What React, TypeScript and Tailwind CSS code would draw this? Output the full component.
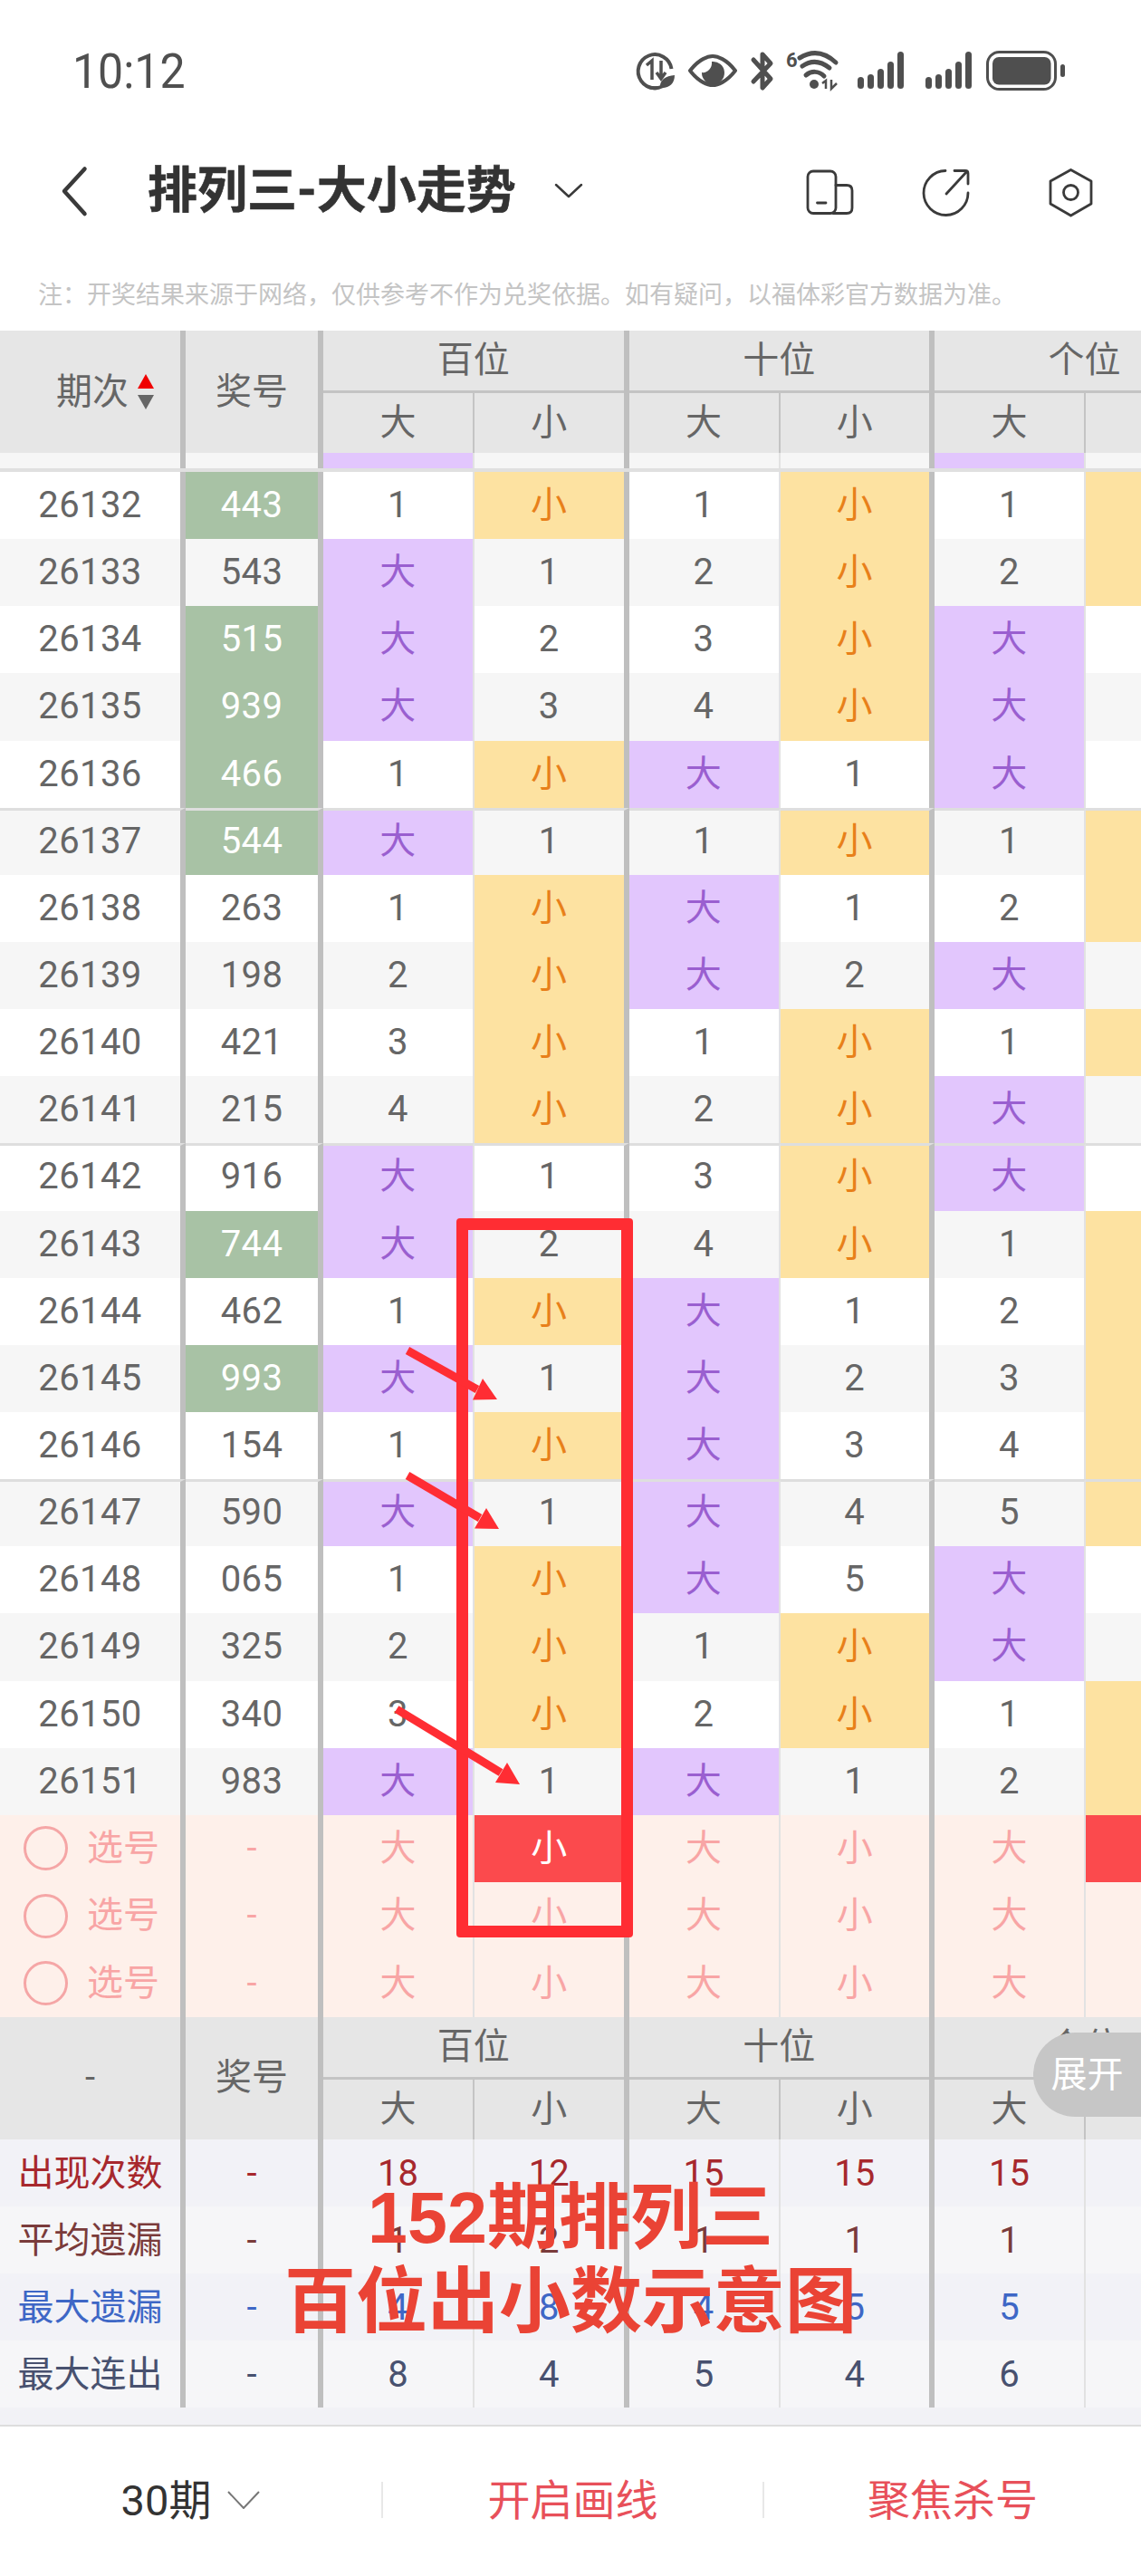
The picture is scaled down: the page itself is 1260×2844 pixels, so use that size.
import React from 'react';

// column widths shared by every table row
const cols = [
    'w-[205px] border-r-[6px] border-r-[#bfbfbf]',
    'w-[152px] border-r-[6px] border-r-[#bfbfbf]',
    'w-[167px] border-r-[2px] border-r-[#e2e2e2]',
    'w-[170.5px] border-r-[6px] border-r-[#bfbfbf]',
    'w-[167px] border-r-[2px] border-r-[#e2e2e2]',
    'w-[170.5px] border-r-[6px] border-r-[#bfbfbf]',
    'w-[167px] border-r-[2px] border-r-[#e2e2e2]',
    'flex-1',
];

const big = '大';
const small = '小';

// period, prize, green prize, hundreds, tens, units
const rows: [string, string, boolean, string[], string[], string[]][] = [
    ['26132', '443', true, ['1', small], ['1', small], ['1', small]],
    ['26133', '543', false, [big, '1'], ['2', small], ['2', small]],
    ['26134', '515', true, [big, '2'], ['3', small], [big, '']],
    ['26135', '939', true, [big, '3'], ['4', small], [big, '']],
    ['26136', '466', true, ['1', small], [big, '1'], [big, '']],
    ['26137', '544', true, [big, '1'], ['1', small], ['1', small]],
    ['26138', '263', false, ['1', small], [big, '1'], ['2', small]],
    ['26139', '198', false, ['2', small], [big, '2'], [big, '']],
    ['26140', '421', false, ['3', small], ['1', small], ['1', small]],
    ['26141', '215', false, ['4', small], ['2', small], [big, '']],
    ['26142', '916', false, [big, '1'], ['3', small], [big, '']],
    ['26143', '744', true, [big, '2'], ['4', small], ['1', small]],
    ['26144', '462', false, ['1', small], [big, '1'], ['2', small]],
    ['26145', '993', true, [big, '1'], [big, '2'], ['3', small]],
    ['26146', '154', false, ['1', small], [big, '3'], ['4', small]],
    ['26147', '590', false, [big, '1'], [big, '4'], ['5', small]],
    ['26148', '065', false, ['1', small], [big, '5'], [big, '']],
    ['26149', '325', false, ['2', small], ['1', small], [big, '']],
    ['26150', '340', false, ['3', small], ['2', small], ['1', small]],
    ['26151', '983', false, [big, '1'], [big, '1'], ['2', small]],
];

const stats = [
    { label: '出现次数', values: ['18', '12', '15', '15', '15'], text: 'text-[#a7282d]', bg: 'bg-[#f2f2f7]' },
    { label: '平均遗漏', values: ['1', '2', '1', '1', '1'], text: 'text-[#7a3b3b]', bg: 'bg-[#f6f6f8]' },
    { label: '最大遗漏', values: ['4', '8', '4', '5', '5'], text: 'text-[#3e67c6]', bg: 'bg-[#f2f2f7]' },
    { label: '最大连出', values: ['8', '4', '5', '4', '6'], text: 'text-[#48516f]', bg: 'bg-[#f6f6f8]' },
];

const StatusIcons = () => (
    <svg viewBox="690 39 500 80" className="w-[500px] h-[80px] ml-auto mr-[70px]" fill="#4f4f4f" stroke="none">
        {/* data saver */}
        <path d="M737 91 A18.5 18.5 0 1 1 741.5 76" fill="none" stroke="#4f4f4f" strokeWidth="4" />
        <path d="M716 96 A18.5 18.5 0 0 0 726 97" fill="none" stroke="#4f4f4f" strokeWidth="4" />
        <path d="M720 88 V67 L714 72 M730 67 V86 M725 80 L730 87 L735 80" fill="none" stroke="#4f4f4f" strokeWidth="3.5" />
        <path d="M729 97 C728 88 735 84 745 83 C745 92 739 98 729 97 Z" />
        {/* eye */}
        <path d="M762 78 C772 65 782 62 787 62 C792 62 802 65 812 78 C802 91 792 94 787 94 C782 94 772 91 762 78 Z" fill="none" stroke="#4f4f4f" strokeWidth="4" strokeLinejoin="round" />
        <path d="M786 68 A12.5 12.5 0 1 1 775 80 C780 81 787 76 786 68 Z" />
        {/* bluetooth */}
        <path d="M832 66 L851 87 L842 97 V60 L851 70 L832 90" fill="none" stroke="#4f4f4f" strokeWidth="5" strokeLinejoin="round" strokeLinecap="round" />
        {/* wifi 6 */}
        <text x="868" y="74" fontSize="22" fontWeight="700" fontFamily="Roboto, sans-serif">6</text>
        <path d="M883 64 C896 56 910 57 923 69" fill="none" stroke="#4f4f4f" strokeWidth="5" strokeLinecap="round" />
        <path d="M886 73 C896 66 906 67 916 75" fill="none" stroke="#4f4f4f" strokeWidth="5" strokeLinecap="round" />
        <path d="M890 83 C896 78 904 78 910 84" fill="none" stroke="#4f4f4f" strokeWidth="5" strokeLinecap="round" />
        <circle cx="899" cy="93" r="5" />
        <path d="M912 98 V89 L908 92 M918 88 V98 L924 92" fill="none" stroke="#4f4f4f" strokeWidth="2.5" />
        {/* signal */}
        {[0, 75].map((dx) =>
            [[947, 85], [958, 82], [969, 76], [980, 68], [991, 57]].map(([x, y]) => (
                <rect key={`${dx}-${x}`} x={x + dx} y={y} width="7" height={98 - y} rx="3.5" />
            )),
        )}
        {/* battery */}
        <rect x="1090.5" y="57.5" width="75" height="41" rx="13" fill="none" stroke="#4f4f4f" strokeWidth="3" />
        <rect x="1096" y="63" width="64.5" height="30.5" rx="7" />
        <rect x="1171" y="71" width="5" height="14" rx="2.5" />
    </svg>
);

const NavIcons = () => (
    <svg viewBox="880 180 340 60" className="w-[340px] h-[60px] ml-auto mr-[40px]" fill="none" stroke="#3a3a3a" strokeWidth="2.8" strokeLinecap="round" strokeLinejoin="round">
        <rect x="892" y="189" width="31" height="46.5" rx="6" />
        <path d="M923 204.5 H935 Q941 204.5 941 210.5 V229.5 Q941 235.5 935 235.5 H920" />
        <path d="M902.5 224 H912" />
        <path d="M1044 188.5 A24.5 24.5 0 1 0 1069 213" />
        <path d="M1045 214 L1068 189 M1054 188.5 H1066 Q1069 188.5 1069 191.5 V203" />
        <path d="M1182.5 187.5 L1205 200 V225 L1182.5 238 L1160 225 V200 Z" />
        <circle cx="1182.5" cy="212.5" r="8" />
    </svg>
);

const HeaderRow = ({ first }: { first: React.ReactNode }) => (
    <div className="flex h-[135px] bg-[#e6e6e6] text-[#666666] text-[40px] leading-none overflow-hidden">
        <div className={`${cols[0]} shrink-0 flex items-center`}>{first}</div>
        <div className={`${cols[1]} shrink-0 flex items-center justify-center`}>奖号</div>
        {['百位', '十位', '个位'].map((name, g) => (
            <div key={name} className={`${g === 2 ? 'w-[331px] shrink-0' : 'w-[337.5px] shrink-0 border-r-[6px] border-r-[#bfbfbf]'}`}>
                <div className="h-[69px] border-b-[3px] border-b-[#c4c4c4] flex items-center justify-center">{name}</div>
                <div className="h-[66px] flex">
                    <div className="w-[167px] shrink-0 border-r-[2px] border-r-[#c4c4c4] flex items-center justify-center">{big}</div>
                    <div className="flex-1 flex items-center justify-center">{g === 2 ? '' : small}</div>
                </div>
            </div>
        ))}
    </div>
);

const ScrolledRow = () => (
    <div className="flex h-[21px] border-b-[4px] border-b-[#e0e0e0] bg-[#f6f6f6]">
        {cols.map((c, i) => (
            <div key={i} className={`${c} ${i === 2 || i === 6 ? 'bg-[#e2c6fd]' : ''}`} />
        ))}
    </div>
);

const DataCell = ({ value, col, stripe, line }: { value: string; col: string; stripe: string; line: string }) => {
    let tone = `${stripe} text-[#666666]`;
    if (value === big) tone = 'bg-[#e2c6fd] text-[#9a5fd0]';
    if (value === small) tone = 'bg-[#fde2a1] text-[#e8801a]';
    return <div className={`${col} ${line} ${tone} shrink-0 h-full flex items-center justify-center`}>{value}</div>;
};

const DataRow = ({ row, index }: { row: (typeof rows)[number]; index: number }) => {
    const [period, prize, green, hundreds, tens, units] = row;
    const stripe = index % 2 === 0 ? 'bg-white' : 'bg-[#f6f6f6]';
    const line = index > 0 && index % 5 === 0 ? 'border-t-[3px] border-t-[#dedede] pb-[3px]' : '';
    const cells = [...hundreds, ...tens, ...units];
    return (
        <div className="flex h-[74.15px] text-[40px] leading-none tracking-[0.4px]">
            <div className={`${cols[0]} ${line} ${stripe} shrink-0 text-[#666666] flex items-center justify-center`}>{period}</div>
            <div className={`${cols[1]} ${line} ${green ? 'bg-[#a8c2a5] text-white' : `${stripe} text-[#666666]`} shrink-0 flex items-center justify-center`}>{prize}</div>
            {cells.map((v, i) => {
                // the last column runs off the screen, only its fill shows
                if (i === 5) {
                    const fill = v === small ? 'bg-[#fde2a1]' : stripe;
                    return <div key={i} className={`flex-1 ${line} ${fill}`} />;
                }
                return <DataCell key={i} value={v} col={cols[i + 2]} stripe={stripe} line={line} />;
            })}
        </div>
    );
};

const PickRow = ({ active }: { active: boolean }) => (
    <div className="flex h-[74.33px] bg-[#fef0ea] text-[#f8a5a5] text-[40px] leading-none">
        <div className={`${cols[0]} shrink-0 flex items-center pl-[26px] gap-[21px]`}>
            <span className="w-[49px] h-[49px] rounded-full border-[3px] border-[#f5a6a6]" />
            <span>选号</span>
        </div>
        <div className={`${cols[1]} shrink-0 flex items-center justify-center`}>-</div>
        {[big, small, big, small, big].map((v, i) => (
            <div
                key={i}
                className={`${cols[i + 2]} shrink-0 flex items-center justify-center ${active && i === 1 ? 'bg-[#fb4a4d] text-white' : ''}`}
            >
                {v}
            </div>
        ))}
        <div className={`${cols[7]} ${active ? 'bg-[#fb4a4d]' : ''}`} />
    </div>
);

const StatRow = ({ stat }: { stat: (typeof stats)[number] }) => (
    <div className={`flex h-[74px] ${stat.bg} ${stat.text} text-[40px] leading-none`}>
        <div className={`${cols[0]} shrink-0 pt-[3px] flex items-center justify-center whitespace-nowrap`}>{stat.label}</div>
        <div className={`${cols[1]} shrink-0 pt-[3px] flex items-center justify-center`}>-</div>
        {stat.values.map((v, i) => (
            <div key={i} className={`${cols[i + 2]} shrink-0 pt-[3px] flex items-center justify-center`}>{v}</div>
        ))}
        <div className={cols[7]} />
    </div>
);

const Annotations = () => (
    <svg viewBox="0 0 1260 2844" className="absolute inset-0 w-[1260px] h-[2844px] pointer-events-none" fill="#ff2d33" stroke="#ff2d33">
        <path d="M450 1491 L527 1534" strokeWidth="9" />
        <polygon points="533,1522 549,1545 522,1545.5" stroke="none" />
        <path d="M450 1629 L530 1676" strokeWidth="9" />
        <polygon points="537,1665 551,1688 524,1687.5" stroke="none" />
        <path d="M438 1887 L553 1957" strokeWidth="9" />
        <polygon points="560,1946 574,1970 547,1968" stroke="none" />
    </svg>
);

export default function App() {
    return (
        <div className="relative w-[1260px] h-[2844px] overflow-hidden bg-white font-['Roboto','Noto_Sans_CJK_SC',sans-serif]">
            <div className="h-[158px] flex items-center pl-[80px]">
                <span className="text-[50px] leading-none text-[#4f4f4f] scale-y-[1.07]">10:12</span>
                <StatusIcons />
            </div>

            <div className="h-[104px] flex items-center">
                <svg viewBox="60 178 44 64" className="w-[44px] h-[64px] ml-[60px]" fill="none" stroke="#3a3a3a" strokeWidth="4.5" strokeLinecap="round" strokeLinejoin="round">
                    <path d="M93.5 186.5 L71 211 L93.5 236" />
                </svg>
                <div className="w-[440px] ml-[59px] mr-[1px] text-[55px] leading-none font-bold text-[#333333] whitespace-nowrap [-webkit-text-stroke:0.6px_#333333]">排列三-大小走势</div>
                <svg viewBox="604 195 50 30" className="w-[50px] h-[30px]" fill="none" stroke="#3a3a3a" strokeWidth="2.5" strokeLinecap="round" strokeLinejoin="round">
                    <path d="M614 204 L628 217 L642 204" />
                </svg>
                <NavIcons />
            </div>

            <div className="h-[103px] pt-[26px] pl-[42px] flex items-center text-[27px] leading-none text-[#c4c4c4] whitespace-nowrap">
                注：开奖结果来源于网络，仅供参考不作为兑奖依据。如有疑问，以福体彩官方数据为准。
            </div>

            <HeaderRow
                first={
                    <div className="pl-[62px] flex items-center gap-[10px]">
                        <span>期次</span>
                        <svg viewBox="0 0 18 39" className="w-[18px] h-[39px]">
                            <polygon points="9,0 18,16 0,16" fill="#f00000" />
                            <polygon points="0,23 18,23 9,39" fill="#666666" />
                        </svg>
                    </div>
                }
            />
            <ScrolledRow />
            {rows.map((row, i) => (
                <DataRow key={row[0]} row={row} index={i} />
            ))}
            <PickRow active />
            <PickRow active={false} />
            <PickRow active={false} />
            <HeaderRow first={<div className="w-full text-center">-</div>} />
            {stats.map((s) => (
                <StatRow key={s.label} stat={s} />
            ))}
            <div className="h-[19px] bg-[#f2f2f6]" />

            <div className="h-[167px] pb-[2px] border-t-[2px] border-t-[#dddddd] flex items-center text-[47px] leading-none">
                <div className="w-[421px] flex items-center justify-center gap-[18px] text-[#333333]">
                    <span>30期</span>
                    <svg viewBox="0 0 36 20" className="w-[36px] h-[20px]" fill="none" stroke="#777777" strokeWidth="2">
                        <path d="M1 1 L18 19 L35 1" />
                    </svg>
                </div>
                <div className="w-[2px] h-[40px] bg-[#e8e8e8]" />
                <div className="w-[419px] text-center text-[#e8505a]">开启画线</div>
                <div className="w-[2px] h-[40px] bg-[#e8e8e8]" />
                <div className="flex-1 text-center text-[#e8505a]">聚焦杀号</div>
            </div>

            {/* hand drawn marks on top of the table */}
            <div className="absolute left-[504px] top-[1345px] w-[195px] h-[794px] border-[13px] border-[#ff2d33] rounded-[4px]" />
            <Annotations />

            <div className="absolute left-[1141px] top-[2244px] w-[119px] h-[93px] rounded-l-full bg-[#c6c6c6] text-white text-[40px] leading-none flex items-center justify-center">
                展开
            </div>

            <div className="absolute left-[230px] top-[2402px] w-[800px] text-center text-[79px] leading-[93px] font-bold text-[#ea4335] font-['Liberation_Sans','Noto_Sans_CJK_SC',sans-serif]">
                <div>152期排列三</div>
                <div>百位出小数示意图</div>
            </div>
        </div>
    );
}
